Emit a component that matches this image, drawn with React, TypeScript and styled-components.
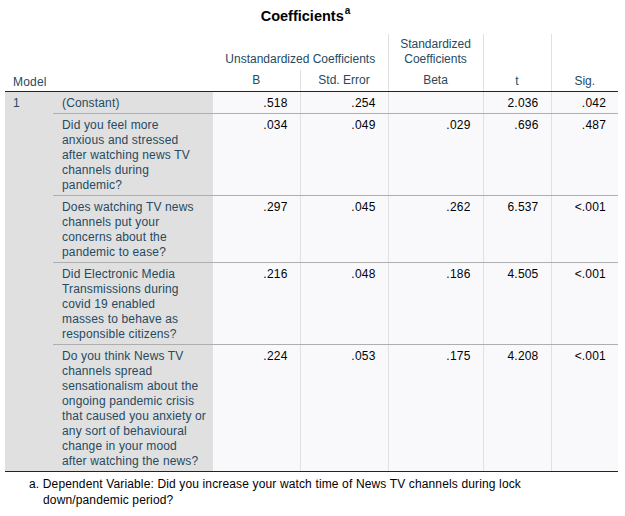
import styled, { createGlobalStyle } from 'styled-components';

const GlobalStyle = createGlobalStyle`
  html, body {
    margin: 0;
    padding: 0;
    background: #ffffff;
  }
  body {
    font-family: 'Liberation Sans', Arial, sans-serif;
    font-size: 12px;
  }
`;

type Row = {
  label: string[];
  values: string[];
};

// label lines kept as SPSS wrapped them in the output viewer
const rows: Row[] = [
  { label: ['(Constant)'], values: ['.518', '.254', '', '2.036', '.042'] },
  {
    label: [
      'Did you feel more',
      'anxious and stressed',
      'after watching news TV',
      'channels during',
      'pandemic?',
    ],
    values: ['.034', '.049', '.029', '.696', '.487'],
  },
  {
    label: [
      'Does watching TV news',
      'channels put your',
      'concerns about the',
      'pandemic to ease?',
    ],
    values: ['.297', '.045', '.262', '6.537', '<.001'],
  },
  {
    label: [
      'Did Electronic Media',
      'Transmissions during',
      'covid 19 enabled',
      'masses to behave as',
      'responsible citizens?',
    ],
    values: ['.216', '.048', '.186', '4.505', '<.001'],
  },
  {
    label: [
      'Do you think News TV',
      'channels spread',
      'sensationalism about the',
      'ongoing pandemic crisis',
      'that caused you anxiety or',
      'any sort of behavioural',
      'change in your mood',
      'after watching the news?',
    ],
    values: ['.224', '.053', '.175', '4.208', '<.001'],
  },
];

// value columns that carry a light divider on their left side
const divided = [false, true, true, true, true];

const App = () => {
  return (
    <>
      <GlobalStyle />
      <Wrapper>
        <Title>
          Coefficients<Sup>a</Sup>
        </Title>
        <Table>
          <colgroup>
            <col style={{ width: 48 }} />
            <col style={{ width: 160 }} />
            <col style={{ width: 87 }} />
            <col style={{ width: 88 }} />
            <col style={{ width: 95 }} />
            <col style={{ width: 68 }} />
            <col style={{ width: 67 }} />
          </colgroup>
          <thead>
            <tr>
              <ModelHead rowSpan={2}>Model</ModelHead>
              <HeadCell rowSpan={2} $last />
              <HeadCell colSpan={2}>Unstandardized Coefficients</HeadCell>
              <HeadCell $divided>Standardized Coefficients</HeadCell>
              <HeadCell rowSpan={2} $divided $last $low>
                t
              </HeadCell>
              <HeadCell rowSpan={2} $divided $last $low>
                Sig.
              </HeadCell>
            </tr>
            <tr>
              <HeadCell $last>B</HeadCell>
              <HeadCell $divided $last>
                Std. Error
              </HeadCell>
              <HeadCell $divided $last>
                Beta
              </HeadCell>
            </tr>
          </thead>
          <tbody>
            {rows.map((row, i) => {
              const last = i === rows.length - 1;
              return (
                <tr key={i}>
                  {i === 0 && <ModelCell rowSpan={rows.length}>1</ModelCell>}
                  <LabelCell $last={last}>
                    {row.label.map((line) => (
                      <Line key={line}>{line}</Line>
                    ))}
                  </LabelCell>
                  {row.values.map((v, j) => (
                    <ValueCell key={j} $divided={divided[j]} $last={last}>
                      {v}
                    </ValueCell>
                  ))}
                </tr>
              );
            })}
          </tbody>
        </Table>
        <Footnote>
          a. Dependent Variable: Did you increase your watch time of News TV
          channels during lock down/pandemic period?
        </Footnote>
      </Wrapper>
    </>
  );
};

export default App;

const Wrapper = styled.div`
  width: 613px;
  padding: 0 5px;
  display: flex;
  flex-direction: column;
`;

const Title = styled.div`
  height: 34px;
  line-height: 32px;
  padding-right: 12px;
  text-align: center;
  font-size: 14.5px;
  font-weight: 700;
  color: #010205;
`;

const Sup = styled.sup`
  font-size: 10px;
  line-height: 0;
  vertical-align: 7px;
  margin-left: 1px;
`;

const Table = styled.table`
  width: 613px;
  table-layout: fixed;
  border-collapse: collapse;
  border-spacing: 0;
  font-size: 12px;
  line-height: 15px;
`;

const HeadCell = styled.th<{
  $divided?: boolean;
  $last?: boolean;
  $low?: boolean;
}>`
  padding: ${({ $low }) => ($low ? '4px 3px 2px' : '3px 3px 3px')};
  font-weight: 400;
  color: #264a60;
  text-align: center;
  vertical-align: bottom;
  background: #ffffff;
  border-left: ${({ $divided }) => ($divided ? '1px solid #e0e0e0' : 'none')};
  border-bottom: ${({ $last }) => ($last ? '1px solid #152935' : 'none')};
`;

const ModelHead = styled.th`
  padding: 4px 3px 1px 8px;
  font-weight: 400;
  color: #264a60;
  text-align: left;
  vertical-align: bottom;
  letter-spacing: 0.2px;
  background: #ffffff;
  border-bottom: 1px solid #152935;
`;

const ModelCell = styled.td`
  padding: 4px 4px 2px 8px;
  vertical-align: top;
  color: #264a60;
  background: #e0e0e0;
  border-bottom: 1px solid #152935;
`;

const LabelCell = styled.td<{ $last?: boolean }>`
  padding: 4px 2px 2px 9px;
  vertical-align: top;
  color: #264a60;
  background: #e0e0e0;
  border-bottom: 1px solid ${({ $last }) => ($last ? '#152935' : '#aeaeae')};
`;

const Line = styled.span`
  display: block;
  white-space: nowrap;
  letter-spacing: 0.15px;
`;

const ValueCell = styled.td<{ $divided?: boolean; $last?: boolean }>`
  padding: 4px 12px 2px 4px;
  vertical-align: top;
  text-align: right;
  letter-spacing: 0.2px;
  color: #010205;
  background: #f9f9fb;
  border-left: ${({ $divided }) => ($divided ? '1px solid #e0e0e0' : 'none')};
  border-bottom: 1px solid ${({ $last }) => ($last ? '#152935' : '#aeaeae')};
`;

const Footnote = styled.div`
  width: 490px;
  padding: 4px 0 0 38px;
  text-indent: -14px;
  font-size: 12px;
  line-height: 16px;
  letter-spacing: 0.14px;
  color: #010205;
`;
